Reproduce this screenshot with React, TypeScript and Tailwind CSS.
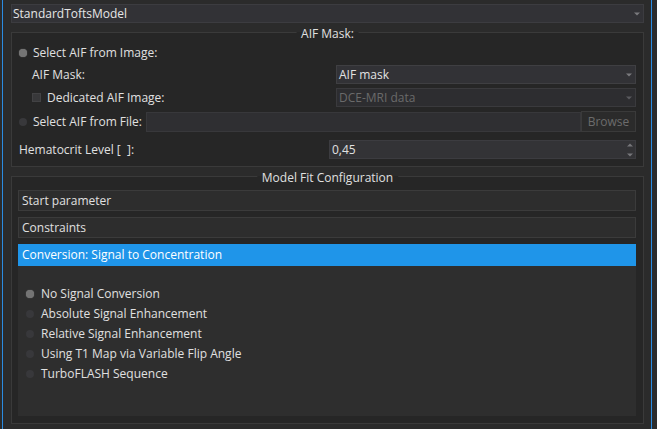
import React from "react";

function Down({ color = "#7a7a7e" }: { color?: string }) {
  return (
    <svg width="6" height="4" viewBox="0 0 6 4" className="block">
      <path d="M0 0.5H6L3 3.5Z" fill={color} />
    </svg>
  );
}

function Up({ color = "#7a7a7e" }: { color?: string }) {
  return (
    <svg width="6" height="4" viewBox="0 0 6 4" className="block">
      <path d="M0 3.5H6L3 0.5Z" fill={color} />
    </svg>
  );
}

function Radio({ checked }: { checked?: boolean }) {
  return (
    <span
      className={
        checked
          ? "block w-[8px] h-[8px] rounded-full bg-[#747474] shadow-[0_0_1px_#888]"
          : "block w-[8px] h-[8px] rounded-full bg-[#38383b]"
      }
    />
  );
}

function Combo({ text, disabled }: { text: string; disabled?: boolean }) {
  return (
    <div
      className={
        disabled
          ? "w-[300px] h-[19px] border border-[#3a3a3d] bg-[#2d2d30] flex items-center pl-[2px] pr-[3px] text-[#6a6a6a]"
          : "w-[300px] h-[19px] border border-[#3f3f42] bg-[#323236] flex items-center pl-[2px] pr-[3px] text-[#e2e2e2]"
      }
    >
      <span className="flex-1 leading-[16px]">{text}</span>
      <Down color={disabled ? "#5a5a5e" : "#7a7a7e"} />
    </div>
  );
}

function GroupTitle({ text, gradient }: { text: string; gradient: string }) {
  return (
    <span
      className={`absolute left-1/2 -translate-x-1/2 top-[-7px] px-[5px] leading-[16px] whitespace-nowrap text-[#e0e0e0] ${gradient}`}
    >
      {text}
    </span>
  );
}

function Tab({ text, selected, h }: { text: string; selected?: boolean; h: string }) {
  return (
    <div
      className={
        selected
          ? `${h} bg-[#1f95e9] flex items-center pl-[4px] text-white`
          : `${h} bg-[#2d2d2d] border border-[#3b3b3b] flex items-center pl-[3px] text-[#e0e0e0]`
      }
    >
      {text}
    </div>
  );
}

const options = [
  { t: "No Signal Conversion", c: true },
  { t: "Absolute Signal Enhancement" },
  { t: "Relative Signal Enhancement" },
  { t: "Using T1 Map via Variable Flip Angle" },
  { t: "TurboFLASH Sequence" },
];

export default function App() {
  return (
    <div className="w-[657px] h-[429px] bg-[#2b2b2b] flex text-[#e0e0e0] text-[12px] font-['Open_Sans',sans-serif] overflow-hidden">
      <div className="w-[2px] shrink-0" />
      <div className="w-[1px] shrink-0 bg-[#2b8be0]" />
      <div className="flex-1 flex flex-col pl-[8px] pr-[7px]">
        {/* top model combo */}
        <div className="mt-[4px] h-[19px] border border-[#3c3c40] bg-[#323236] flex items-center pl-[1px] pr-[3px]">
          <span className="flex-1 leading-[16px] text-[#e6e6e6]">StandardToftsModel</span>
          <Down />
        </div>

        {/* AIF Mask group */}
        <div className="relative mt-[9px] border border-[#3a3a3a] bg-[#262626] pt-[11px] pb-[7px] px-[7px] flex flex-col">
          <GroupTitle text="AIF Mask:" gradient="bg-[linear-gradient(#2b2b2b_0_6px,#262626_6px)]" />
          <div className="h-[18px] flex items-center">
            <Radio checked />
            <span className="ml-[6px]">Select AIF from Image:</span>
          </div>
          <div className="mt-[3px] h-[19px] flex items-center">
            <span className="flex-1 pl-[13px]">AIF Mask:</span>
            <Combo text="AIF mask" />
          </div>
          <div className="mt-[4px] h-[19px] flex items-center">
            <div className="flex-1 flex items-center pl-[13px]">
              <span className="block w-[9px] h-[9px] bg-[#38383a] border border-[#424244]" />
              <span className="ml-[6px]">Dedicated AIF Image:</span>
            </div>
            <Combo text="DCE-MRI data" disabled />
          </div>
          <div className="mt-[4px] h-[21px] flex items-center">
            <div className="w-[127px] flex items-center">
              <Radio />
              <span className="ml-[6px]">Select AIF from File:</span>
            </div>
            <div className="flex-1 h-[20px] border border-[#38383b] bg-[#2f2f32]" />
            <div className="w-[55px] h-[21px] border border-[#3a3a3a] bg-[#2b2b2b] flex items-center justify-center text-[#6c6c6c]">
              Browse
            </div>
          </div>
          <div className="mt-[8px] h-[19px] flex items-center">
            <span className="flex-1">Hematocrit Level [&nbsp; ]:</span>
            <div className="w-[307px] h-[19px] border border-[#3c3c40] bg-[#333336] flex items-center pl-[2px] pr-[2px]">
              <span className="flex-1 leading-[16px]">0,45</span>
              <div className="flex flex-col gap-[6px]">
                <Up color="#77777a" />
                <Down color="#77777a" />
              </div>
            </div>
          </div>
        </div>

        {/* Model Fit Configuration group */}
        <div className="relative mt-[9px] border border-[#3a3a3a] bg-[#262626] pt-[13px] pb-[7px] pl-[6px] pr-[7px] flex flex-col">
          <GroupTitle text="Model Fit Configuration" gradient="bg-[linear-gradient(#2b2b2b_0_6px,#262626_6px)]" />
          <Tab text="Start parameter" h="h-[21px]" />
          <div className="mt-[6px]">
            <Tab text="Constraints" h="h-[21px]" />
          </div>
          <div className="mt-[6px]">
            <Tab text="Conversion: Signal to Concentration" h="h-[22px]" selected />
          </div>
          <div className="h-[150px] bg-[#2e2e2e] pt-[18px] pl-[8px] flex flex-col">
            {options.map((o) => (
              <div key={o.t} className="h-[20px] flex items-center">
                <Radio checked={o.c} />
                <span className="ml-[7px]">{o.t}</span>
              </div>
            ))}
          </div>
        </div>
      </div>
      <div className="w-[1px] shrink-0 bg-[#2b8be0]" />
      <div className="w-[5px] shrink-0" />
    </div>
  );
}
